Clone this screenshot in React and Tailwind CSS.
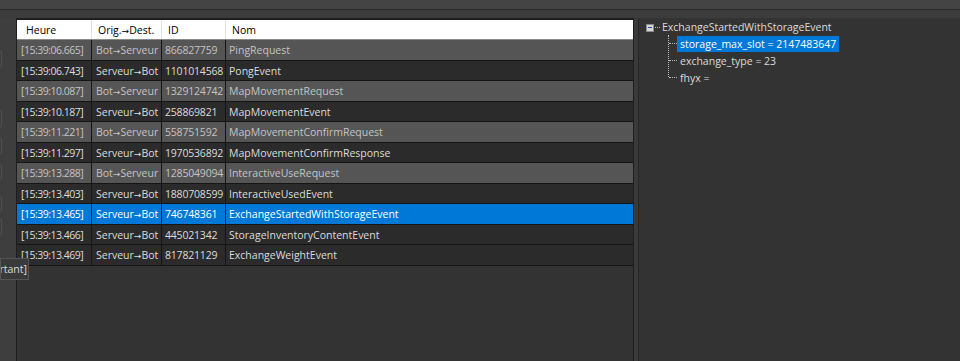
import React from "react";

const rows = [
  ["[15:39:06.665]", "Bot→Serveur", "866827759", "PingRequest"],
  ["[15:39:06.743]", "Serveur→Bot", "1101014568", "PongEvent"],
  ["[15:39:10.087]", "Bot→Serveur", "1329124742", "MapMovementRequest"],
  ["[15:39:10.187]", "Serveur→Bot", "258869821", "MapMovementEvent"],
  ["[15:39:11.221]", "Bot→Serveur", "558751592", "MapMovementConfirmRequest"],
  ["[15:39:11.297]", "Serveur→Bot", "1970536892", "MapMovementConfirmResponse"],
  ["[15:39:13.288]", "Bot→Serveur", "1285049094", "InteractiveUseRequest"],
  ["[15:39:13.403]", "Serveur→Bot", "1880708599", "InteractiveUsedEvent"],
  ["[15:39:13.465]", "Serveur→Bot", "746748361", "ExchangeStartedWithStorageEvent"],
  ["[15:39:13.466]", "Serveur→Bot", "445021342", "StorageInventoryContentEvent"],
  ["[15:39:13.469]", "Serveur→Bot", "817821129", "ExchangeWeightEvent"],
];

const selected = 8;

// long thin arrow like the Segoe UI one
function Dir({ text }) {
  const [a, b] = text.split("→");
  return (
    <>
      {a}
      <span style={{ fontFamily: '"DejaVu Sans", sans-serif' }} className="text-[9px]">→</span>
      {b}
    </>
  );
}

function Row({ r, i }) {
  const sel = i === selected;
  const out = r[1] === "Bot→Serveur";
  const bg = sel ? "bg-[#0078d7] text-white" : out ? "bg-[#555555] text-[#c4c4c4]" : "bg-[#2b2b2b] text-[#dcdcdc]";
  return (
    <div className={`flex h-[20.55px] border-b border-[#151515] ${bg}`}>
      <div className="w-[75px] pl-[4px] border-r border-[#151515] leading-[21px] tracking-[-0.5px] whitespace-nowrap overflow-hidden">{r[0]}</div>
      <div className="w-[70px] pl-[4px] border-r border-[#151515] leading-[21px] whitespace-nowrap overflow-hidden">
        <Dir text={r[1]} />
      </div>
      <div className="w-[64px] pl-[3px] border-r border-[#151515] leading-[21px] tracking-[-0.2px] whitespace-nowrap overflow-hidden">{r[2]}</div>
      <div className="flex-1 pl-[3px] leading-[21px] whitespace-nowrap overflow-hidden">{r[3]}</div>
    </div>
  );
}

export default function App() {
  return (
    <div
      className="w-[960px] h-[361px] bg-[#3c3c3c] flex flex-col overflow-hidden relative text-[10.5px]"
      style={{ fontFamily: '"Open Sans", "Noto Sans", sans-serif' }}
    >
      <div className="h-[10px] bg-[#444444] border-b border-[#2a2a2a]" />
      <div className="flex-1 flex pt-[8px]">
        <div className="w-[16px] bg-[#3e3e3e] relative">
          {[50, 110, 137, 163, 195, 218].map((t) => (
            <div key={t} className="absolute left-[-20px] w-[22px] h-[18px] rounded-[3px] border border-[#505050]" style={{ top: t - 18 }} />
          ))}
        </div>
        <div className="w-[618px] bg-[#333333] border-t-2 border-l border-r border-[#1e1e1e]">
          <div className="flex h-[20px] bg-white text-black border-b border-[#8a8a8a]">
            <div className="w-[75px] pl-[9px] border-r border-[#e0e0e0] leading-[20px]">Heure</div>
            <div className="w-[70px] pl-[6px] border-r border-[#e0e0e0] leading-[20px]">
              <Dir text="Orig.→Dest." />
            </div>
            <div className="w-[64px] pl-[6px] border-r border-[#e0e0e0] leading-[20px]">ID</div>
            <div className="flex-1 pl-[6px] leading-[20px]">Nom</div>
          </div>
          {rows.map((r, i) => (
            <Row key={i} r={r} i={i} />
          ))}
        </div>
        <div className="w-[5px] bg-[#3a3a3a] border-r border-[#262626]" />
        <div className="flex-1 bg-[#333333] text-[#dcdcdc] pt-[1px] pl-[7px]">
          <div className="flex items-center h-[17px]">
            <div className="w-[8px] h-[8px] bg-[#d8d8d8] border border-[#8a8a8a] flex items-center justify-center">
              <div className="w-[4px] h-px bg-[#1a4fa0]" />
            </div>
            <div className="w-[5px] border-t border-dotted border-[#bbbbbb] ml-px" />
            <span className="ml-[2px] leading-[17px]">ExchangeStartedWithStorageEvent</span>
          </div>
          <div className="ml-[22px] border-l border-dotted border-[#bbbbbb] h-[42px] relative">
            {[
              ["storage_max_slot = 2147483647", true],
              ["exchange_type = 23", false],
              ["fhyx =", false],
            ].map(([t, s], k) => (
              <div key={k} className="flex items-center h-[17px] first:-mt-px">
                <div className="w-[8px] border-t border-dotted border-[#bbbbbb]" />
                <span className={`px-[3px] leading-[16px] whitespace-nowrap ${s ? "bg-[#0078d7] text-white" : ""}`}>{t}</span>
              </div>
            ))}
          </div>
        </div>
      </div>
      <div className="absolute left-0 top-[258px] h-[22px] w-[29px] bg-[#3a3a3a] border border-[#555555] text-[#dcdcdc] leading-[20px] overflow-hidden flex justify-end pr-[1px]">
        <span className="whitespace-nowrap">rtant]</span>
      </div>
    </div>
  );
}
